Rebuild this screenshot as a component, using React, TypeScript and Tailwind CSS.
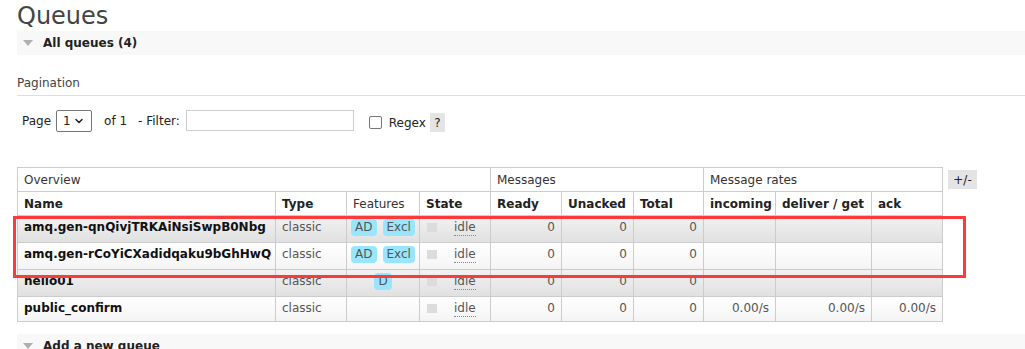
import { ChevronDown } from 'lucide-react'

const font = { fontFamily: '"DejaVu Sans", Verdana, sans-serif' }

type Row = {
  name: string
  features: string[]
  alt: boolean
  rates: boolean
  h: string
}

const rows: Row[] = [
  { name: 'amq.gen-qnQivjTRKAiNsiSwpB0Nbg', features: ['AD', 'Excl'], alt: true, rates: false, h: 'h-[27px]' },
  { name: 'amq.gen-rCoYiCXadidqaku9bGhHwQ', features: ['AD', 'Excl'], alt: false, rates: false, h: 'h-[27px]' },
  { name: 'hello01', features: ['D'], alt: true, rates: false, h: 'h-[27px]' },
  { name: 'public_confirm', features: [], alt: false, rates: true, h: 'h-[25px]' },
]

function Toggle({ label }: { label: string }) {
  return (
    <div className="bg-[#f8f8f8] flex items-center gap-[10px] pl-[6px] h-[24px]">
      <span className="w-0 h-0 border-l-[5px] border-r-[5px] border-t-[6px] border-l-transparent border-r-transparent border-t-[#b0b0b0]" />
      <span className="text-[12px] font-bold text-[#222]">{label}</span>
    </div>
  )
}

export default function App() {
  const th = 'border border-[#ccc] text-left px-[6px] font-normal text-[12px] text-[#333]'
  const thb = 'border border-[#ccc] text-left px-[6px] font-bold text-[12px] text-[#222]'
  const td = 'border border-[#ccc] px-[6px] pt-[2px] align-top text-[12px]'

  return (
    <div className="relative w-[1025px] h-[349px] overflow-hidden bg-white pl-[17px]" style={font}>
      <h1 className="text-[24px] leading-[30px] font-normal text-[#444] pt-[1px]">Queues</h1>
      <Toggle label="All queues (4)" />

      <div className="mt-[19px] text-[12px] text-[#444] pb-[3px] border-b border-[#ddd]">Pagination</div>

      <div className="mt-[13px] flex items-center h-[23px] text-[12px] text-[#222]">
        <span className="ml-[5px]">Page</span>
        <div className="ml-[5px] w-[36px] h-[22px] border border-[#767676] rounded-[2px] flex items-center justify-between px-[6px]">
          <span>1</span>
          <ChevronDown size={12} strokeWidth={3} />
        </div>
        <span className="ml-[12px]">of 1</span>
        <span className="ml-[11px]">- Filter:</span>
        <div className="ml-[6px] w-[168px] h-[21px] border border-[#ccc]" />
        <div className="ml-[15px] w-[13px] h-[13px] border border-[#767676] rounded-[2px] mt-[4px]" />
        <span className="ml-[7px] mt-[4px]">Regex</span>
        <span className="ml-[4px] mt-[4px] bg-[#e4e4e4] w-[15px] h-[19px] flex items-center justify-center">?</span>
      </div>

      <div className="mt-[35px] flex items-start">
        <table className="table-fixed border-collapse w-[926px]">
          <colgroup>
            <col className="w-[258px]" />
            <col className="w-[71px]" />
            <col className="w-[73px]" />
            <col className="w-[71px]" />
            <col className="w-[71px]" />
            <col className="w-[72px]" />
            <col className="w-[70px]" />
            <col className="w-[72px]" />
            <col className="w-[96px]" />
            <col className="w-[71px]" />
          </colgroup>
          <thead>
            <tr className="h-[24px]">
              <th colSpan={4} className={th}>Overview</th>
              <th colSpan={3} className={th}>Messages</th>
              <th colSpan={3} className={th}>Message rates</th>
            </tr>
            <tr className="h-[24px]">
              <th className={thb}>Name</th>
              <th className={thb}>Type</th>
              <th className={th}>Features</th>
              <th className={thb}>State</th>
              <th className={thb}>Ready</th>
              <th className={thb}>Unacked</th>
              <th className={thb}>Total</th>
              <th className={thb}>incoming</th>
              <th className={thb}>deliver / get</th>
              <th className={thb}>ack</th>
            </tr>
          </thead>
          <tbody>
            {rows.map((r) => (
              <tr
                key={r.name}
                className={`${r.h} ${r.alt ? 'bg-gradient-to-b from-[#f2f2f2] to-[#e0e0e0]' : 'bg-gradient-to-b from-[#ffffff] to-[#f4f4f4]'}`}
              >
                <td className={`${td} font-bold text-[#111] whitespace-nowrap`}>{r.name}</td>
                <td className={`${td} text-[#555]`}>classic</td>
                <td className={`${td} !pt-[3px] text-center`}>
                  <div className="flex justify-center gap-[6px]">
                    {r.features.map((f) => (
                      <span key={f} className="bg-[#99e6fc] text-[#555] rounded-[4px] px-[4px] leading-[17px] text-[12px]">
                        {f}
                      </span>
                    ))}
                  </div>
                </td>
                <td className={`${td} text-[#555]`}>
                  <div className="flex items-start">
                    <span className="w-[10px] h-[9px] bg-[#dcdcdc] mt-[5px] ml-[1px]" />
                    <span className="ml-[17px] mt-[1px] border-b border-dotted border-[#888] leading-[16px]">idle</span>
                  </div>
                </td>
                <td className={`${td} text-right text-[#555]`}>0</td>
                <td className={`${td} text-right text-[#555]`}>0</td>
                <td className={`${td} text-right text-[#555]`}>0</td>
                <td className={`${td} text-right text-[#555]`}>{r.rates ? '0.00/s' : ''}</td>
                <td className={`${td} text-right text-[#555]`}>{r.rates ? '0.00/s' : ''}</td>
                <td className={`${td} text-right text-[#555]`}>{r.rates ? '0.00/s' : ''}</td>
              </tr>
            ))}
          </tbody>
        </table>
        <span className="ml-[5px] mt-[3px] bg-[#e4e4e4] w-[29px] h-[19px] flex items-center justify-center text-[12px] text-[#222]">
          +/-
        </span>
      </div>

      <div className="mt-[12px]">
        <Toggle label="Add a new queue" />
      </div>

      <div className="absolute left-[13px] top-[216px] w-[953px] h-[62px] border-[3px] border-[#fd3a3a]" />
    </div>
  )
}
